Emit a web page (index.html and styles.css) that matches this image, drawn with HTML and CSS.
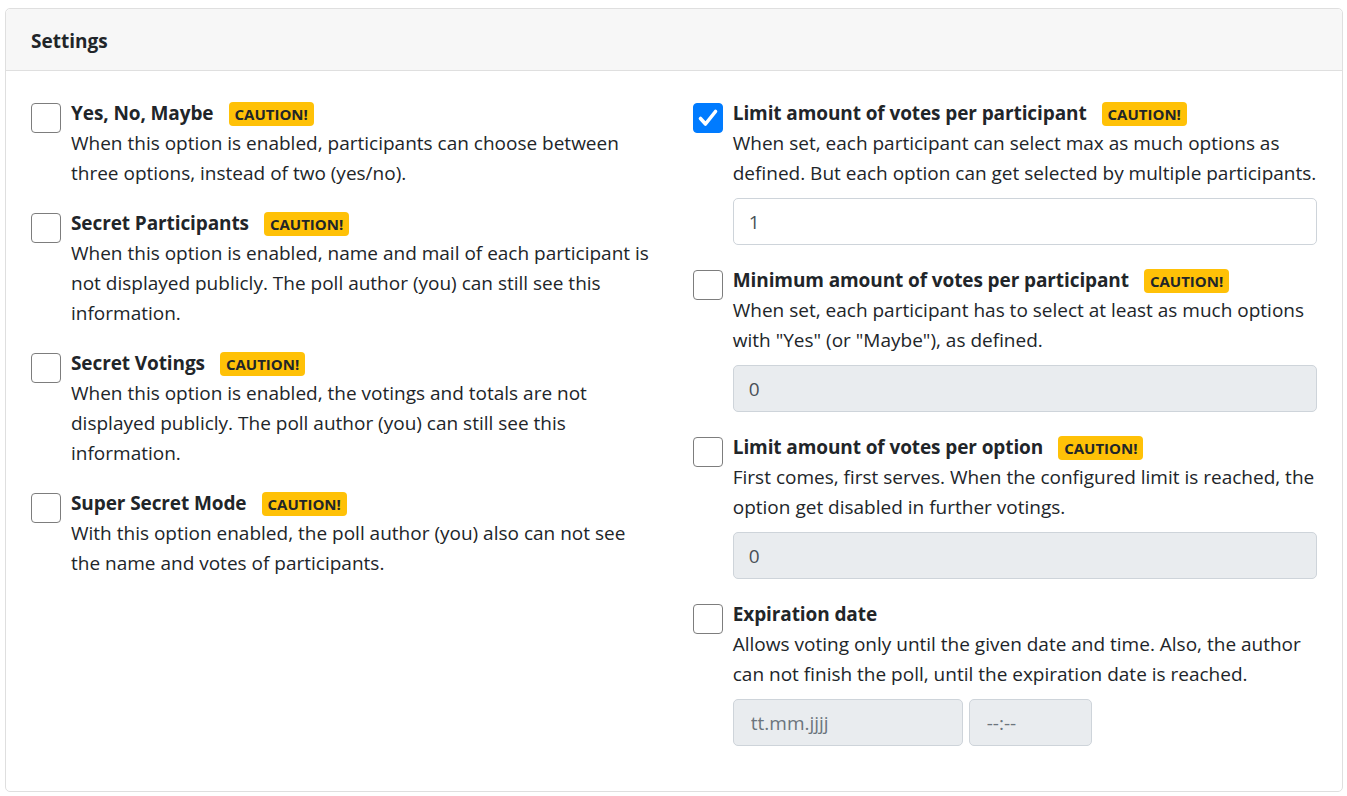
FILE: index.html
```html
<!DOCTYPE html>
<html lang="en">
<head>
<meta charset="utf-8">
<title>Settings</title>
<link rel="stylesheet" href="styles.css">
</head>
<body>
<div class="card">
  <div class="card-header">Settings</div>
  <div class="card-body">
    <div class="col">
      <div class="check">
        <span class="box"></span>
        <div class="check-body">
          <div class="title">Yes, No, Maybe <span class="badge">CAUTION!</span></div>
          <div class="desc">When this option is enabled, participants can choose between three options, instead of two (yes/no).</div>
        </div>
      </div>
      <div class="check">
        <span class="box"></span>
        <div class="check-body">
          <div class="title">Secret Participants <span class="badge">CAUTION!</span></div>
          <div class="desc">When this option is enabled, name and mail of each participant is not displayed publicly. The poll author (you) can still see this information.</div>
        </div>
      </div>
      <div class="check">
        <span class="box"></span>
        <div class="check-body">
          <div class="title">Secret Votings <span class="badge">CAUTION!</span></div>
          <div class="desc">When this option is enabled, the votings and totals are not displayed publicly. The poll author (you) can still see this information.</div>
        </div>
      </div>
      <div class="check">
        <span class="box"></span>
        <div class="check-body">
          <div class="title">Super Secret Mode <span class="badge">CAUTION!</span></div>
          <div class="desc">With this option enabled, the poll author (you) also can not see the name and votes of participants.</div>
        </div>
      </div>
    </div>
    <div class="col">
      <div class="check">
        <span class="box checked"><svg viewBox="0 0 30 30" width="30" height="30"><path d="M7.5 15.5 L12.5 21 L22.5 8.5" fill="none" stroke="#fff" stroke-width="3.6" stroke-linecap="round" stroke-linejoin="round"/></svg></span>
        <div class="check-body">
          <div class="title">Limit amount of votes per participant <span class="badge">CAUTION!</span></div>
          <div class="desc">When set, each participant can select max as much options as defined. But each option can get selected by multiple participants.</div>
          <input class="field" type="text" value="1">
        </div>
      </div>
      <div class="check">
        <span class="box"></span>
        <div class="check-body">
          <div class="title">Minimum amount of votes per participant <span class="badge">CAUTION!</span></div>
          <div class="desc">When set, each participant has to select at least as much options with "Yes" (or "Maybe"), as defined.</div>
          <input class="field disabled" type="text" value="0" disabled>
        </div>
      </div>
      <div class="check">
        <span class="box"></span>
        <div class="check-body">
          <div class="title">Limit amount of votes per option <span class="badge">CAUTION!</span></div>
          <div class="desc">First comes, first serves. When the configured limit is reached, the option get disabled in further votings.</div>
          <input class="field disabled" type="text" value="0" disabled>
        </div>
      </div>
      <div class="check">
        <span class="box"></span>
        <div class="check-body">
          <div class="title">Expiration date</div>
          <div class="desc">Allows voting only until the given date and time. Also, the author can not finish the poll, until the expiration date is reached.</div>
          <div class="datetime">
            <input class="field disabled date" type="text" value="tt.mm.jjjj" disabled>
            <input class="field disabled time" type="text" value="--:--" disabled>
          </div>
        </div>
      </div>
    </div>
  </div>
</div>
</body>
</html>
```

FILE: styles.css
```css
* { box-sizing: border-box; }
html, body { margin: 0; background: #fff; }
body {
  padding: 8px 4px 0 5px;
  font-family: "Open Sans", "Noto Sans", sans-serif;
  font-size: 19px;
  line-height: 30px;
  color: #212529;
}
.card {
  width: 1338px;
  border: 1px solid #dfdfdf;
  border-radius: 5px;
  background: #fff;
}
.card-header {
  height: 62px;
  padding: 17px 25px 14px;
  background: #f7f7f7;
  border-bottom: 1px solid #dfdfdf;
  border-radius: 5px 5px 0 0;
  font-weight: 700;
  font-size: 19px;
  line-height: 30px;
}
.card-body {
  padding: 27px 25px 25px;
  display: grid;
  grid-template-columns: 1fr 1fr;
  column-gap: 37.5px;
}
.col { display: flex; flex-direction: column; }
.check {
  display: flex;
  gap: 10px;
  margin-bottom: 20px;
}
.box {
  flex: 0 0 30px;
  width: 30px;
  height: 30px;
  margin-top: 5px;
  border: 1px solid #7d7d7d;
  border-radius: 4px;
  background: #fff;
  display: flex;
}
.box.checked {
  background: #007bff;
  border-color: #007bff;
}
.box svg { display: block; margin: -1px; }
.check-body { flex: 1; min-width: 0; }
.title {
  font-weight: 700;
  letter-spacing: -0.1px;
  display: flex;
  align-items: center;
}
.badge {
  display: inline-block;
  margin-left: 15px;
  padding: 0 6px;
  height: 24px;
  line-height: 24px;
  background: #ffc107;
  color: #212529;
  border-radius: 4px;
  font-size: 15px;
  font-weight: 700;
  letter-spacing: 0;
  margin-top: 2px;
}
.field {
  display: block;
  width: 100%;
  height: 47px;
  margin-top: 10px;
  padding: 7px 15px;
  font-family: inherit;
  font-size: 19px;
  line-height: 30px;
  color: #495057;
  background: #fff;
  border: 1px solid #ced4da;
  border-radius: 5px;
  outline: none;
}
.field.disabled {
  background: #e9ecef;
  color: #495057;
  -webkit-text-fill-color: #495057;
  opacity: 1;
}
.datetime {
  display: flex;
  gap: 6px;
  margin-top: 10px;
}
.datetime .field { margin-top: 0; }
.field.date { width: 230px; -webkit-text-fill-color: #6c757d; color: #6c757d; padding-left: 17px; }
.field.time { width: 123px; -webkit-text-fill-color: #6c757d; color: #6c757d; padding-left: 17px; }
```
